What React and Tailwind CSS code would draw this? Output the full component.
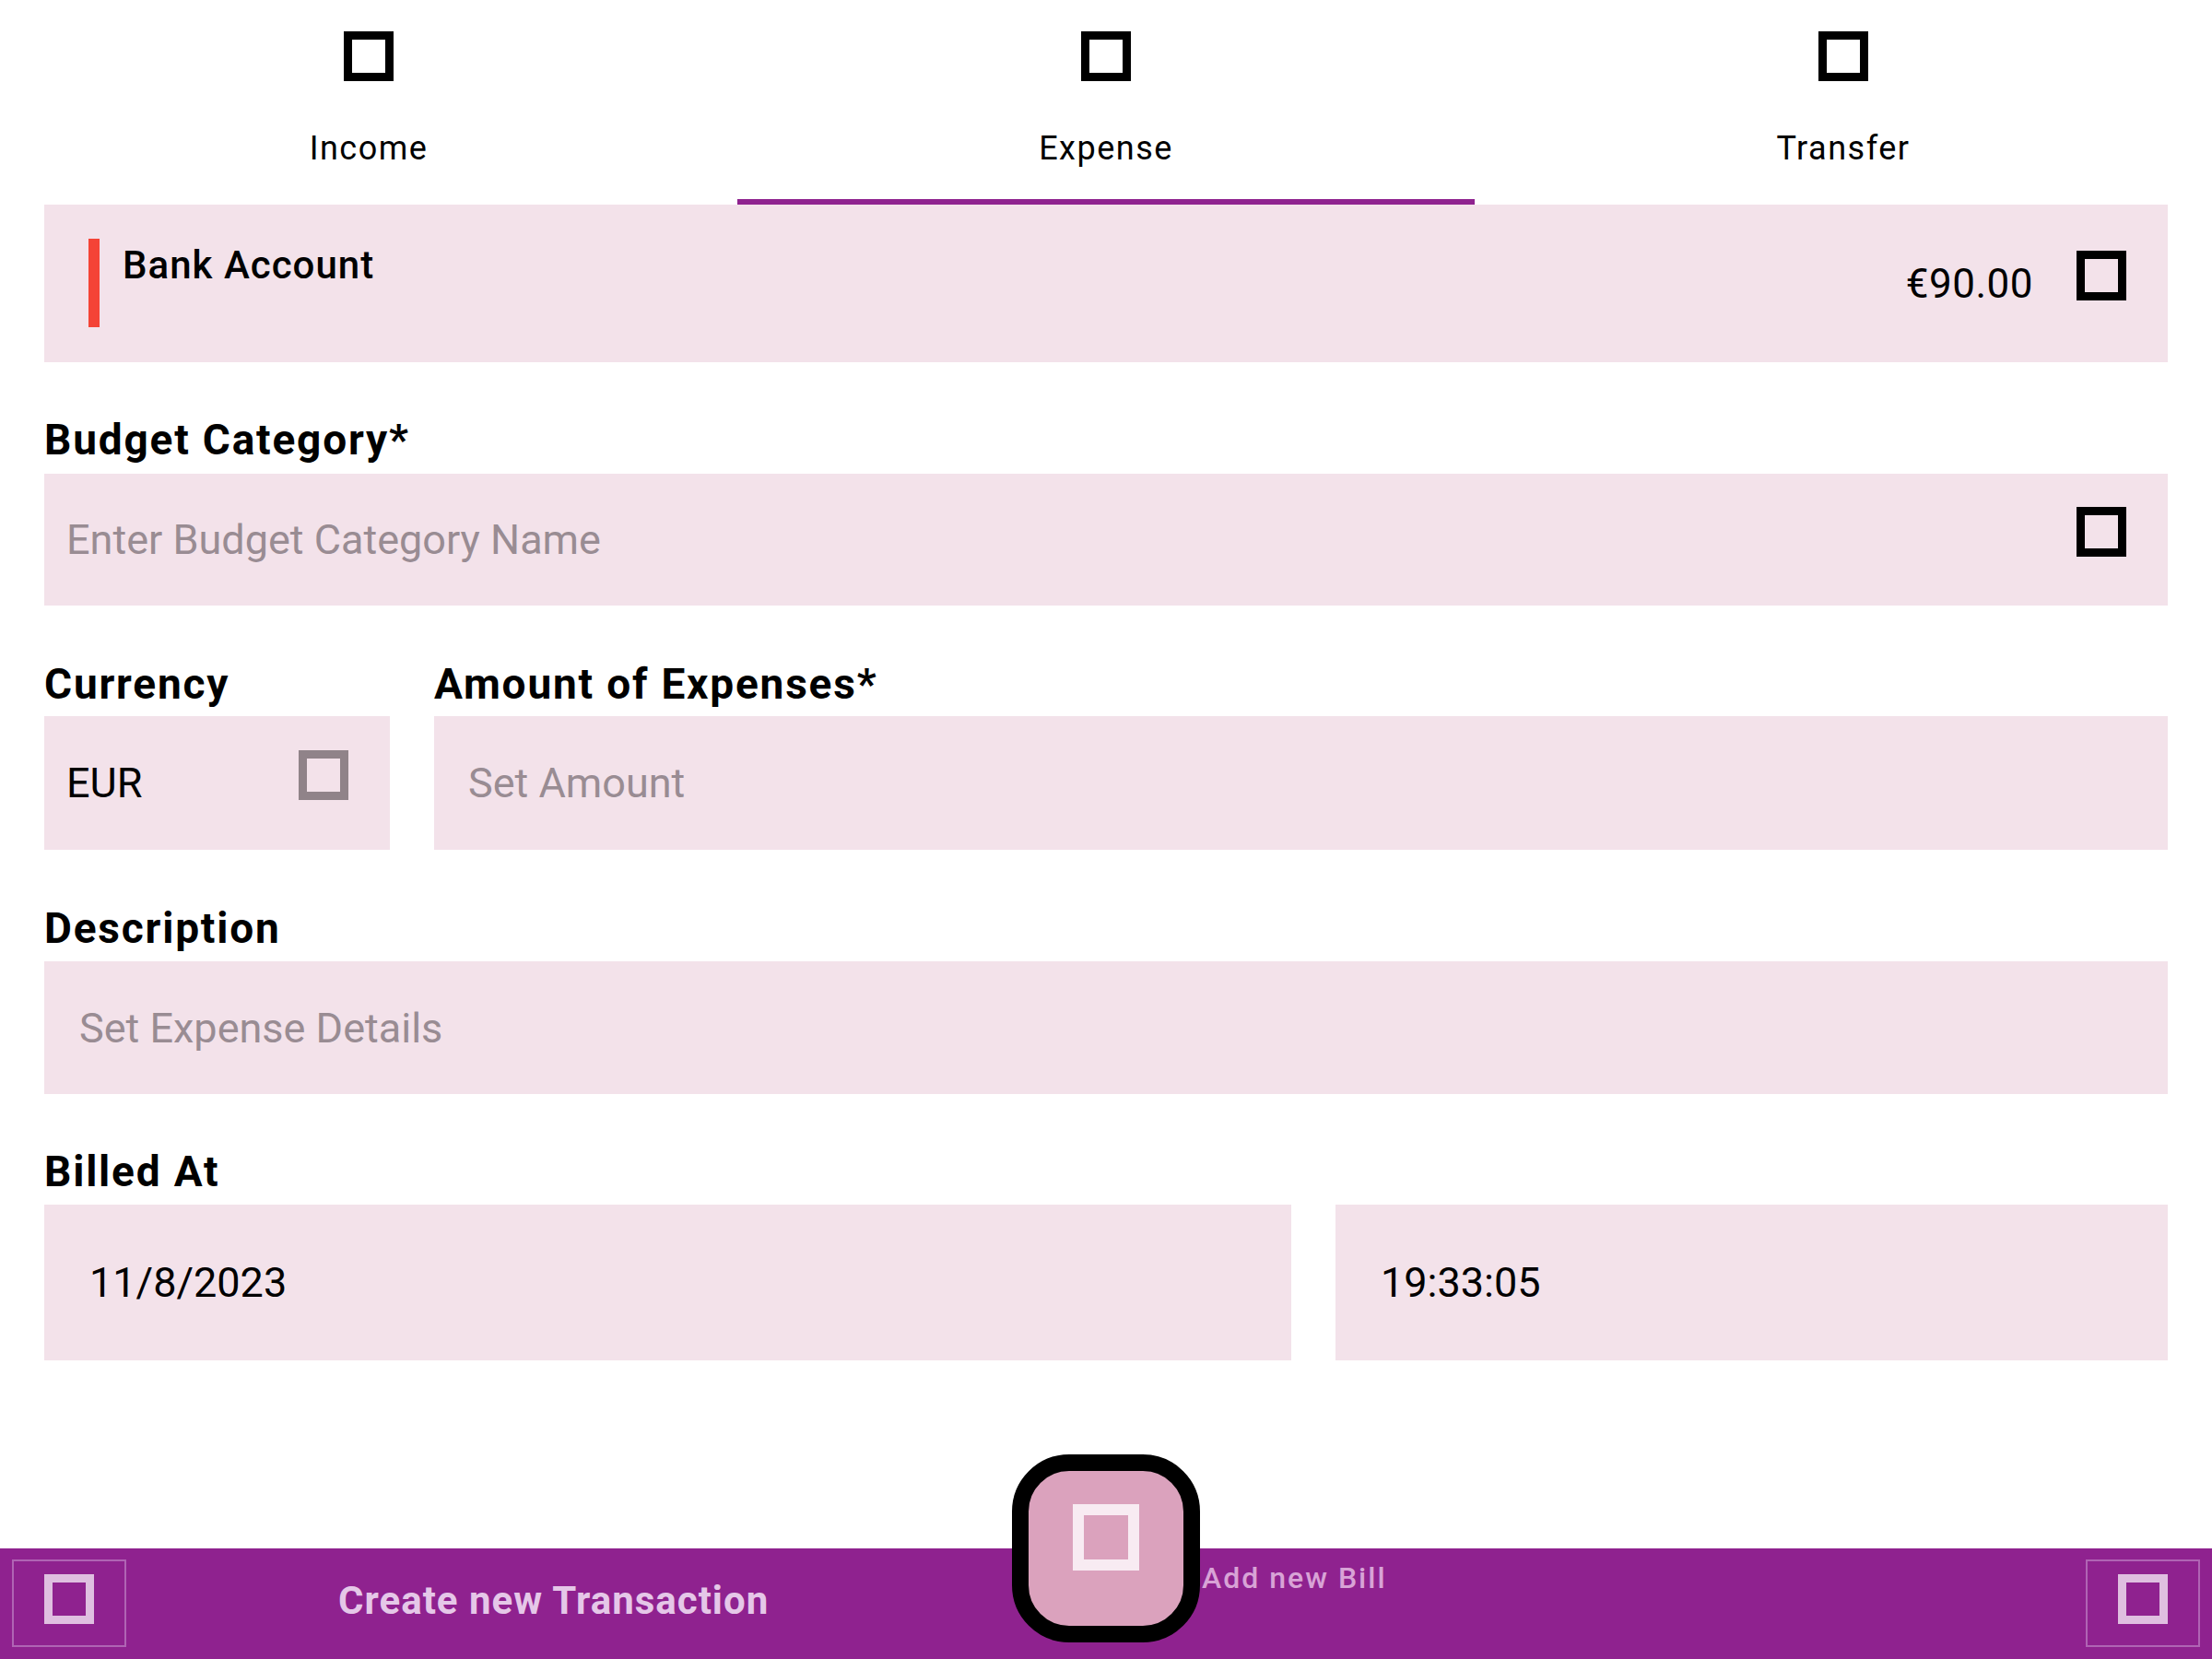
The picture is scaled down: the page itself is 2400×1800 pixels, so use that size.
import React from "react";

const PURPLE = "bg-[#8f228f]";

function Tofu({ className }) {
  // missing-glyph box the app draws in place of its icons
  return <div className={`shrink-0 w-[54px] h-[54px] border-[9px] ${className}`} />;
}

function Label({ children, className = "" }) {
  return (
    <div className={`text-[46px] font-bold leading-none tracking-[1.8px] text-black ${className}`}>
      {children}
    </div>
  );
}

function Tab({ label, active }) {
  return (
    <div
      className={`flex flex-col items-center h-[222px] pt-[34px] ${
        active ? "border-b-[6px] border-[#8f228f]" : ""
      }`}
    >
      <Tofu className="border-black" />
      <div className="mt-[55px] text-[36px] leading-none tracking-[1.5px] text-black">{label}</div>
    </div>
  );
}

export default function App() {
  return (
    <div className="relative flex flex-col w-full h-[1800px] overflow-hidden bg-white font-['Roboto',sans-serif]">
      <div className="grid grid-cols-3">
        <Tab label="Income" />
        <Tab label="Expense" active />
        <Tab label="Transfer" />
      </div>

      <div className="flex flex-col px-[48px]">
        <div className="flex h-[171px] bg-[#f3e2ea] pl-[48px] pr-[45px]">
          <div className="mt-[37px] h-[96px] w-[12px] bg-[#f44336]" />
          <div className="ml-[25px] mt-[45px] text-[42px] font-medium leading-none tracking-[1px] text-black">
            Bank Account
          </div>
          <div className="ml-auto mt-[50px] flex items-start">
            <div className="mt-[14px] text-[44px] leading-none tracking-[0.5px] text-black">€90.00</div>
            <Tofu className="ml-[47px] border-black" />
          </div>
        </div>

        <Label className="mt-[61px]">Budget Category*</Label>
        <div className="mt-[14px] flex items-center h-[143px] bg-[#f3e2ea] pl-[24px] pr-[45px]">
          <div className="text-[45px] leading-none text-[#998c93]">Enter Budget Category Name</div>
          <Tofu className="ml-auto mb-[18px] border-black" />
        </div>

        <div className="mt-[62px] flex gap-[48px]">
          <div className="flex flex-col w-[375px]">
            <Label>Currency</Label>
            <div className="mt-[12px] flex items-center h-[145px] bg-[#f3e2ea] pl-[24px] pr-[45px]">
              <div className="text-[45px] leading-none text-black">EUR</div>
              <Tofu className="ml-auto mb-[18px] border-[#908389]" />
            </div>
          </div>
          <div className="flex flex-col flex-1">
            <Label>Amount of Expenses*</Label>
            <div className="mt-[12px] flex items-center h-[145px] bg-[#f3e2ea] pl-[37px]">
              <div className="text-[45px] leading-none text-[#998c93]">Set Amount</div>
            </div>
          </div>
        </div>

        <Label className="mt-[62px]">Description</Label>
        <div className="mt-[13px] flex items-center h-[144px] bg-[#f3e2ea] pl-[38px]">
          <div className="text-[45px] leading-none text-[#998c93]">Set Expense Details</div>
        </div>

        <Label className="mt-[61px]">Billed At</Label>
        <div className="mt-[13px] flex gap-[48px]">
          <div className="w-[1353px] shrink-0 flex items-center h-[169px] bg-[#f3e2ea] pl-[49px]">
            <div className="text-[45px] leading-none text-black">11/8/2023</div>
          </div>
          <div className="flex-1 flex items-center h-[169px] bg-[#f3e2ea] pl-[49px]">
            <div className="text-[45px] leading-none text-black">19:33:05</div>
          </div>
        </div>
      </div>

      <div className={`relative mt-auto flex items-start h-[120px] ${PURPLE}`}>
        <div className="ml-[13px] mt-[12px] flex items-center justify-center w-[124px] h-[95px] border-2 border-[#b064b4]">
          <Tofu className="mb-[10px] border-[#dfbfe0]" />
        </div>
        <div className="ml-[230px] mt-[36px] text-[42px] font-bold leading-none tracking-[1px] text-[#e5c7e8]">
          Create new Transaction
        </div>
        <div className="ml-auto mr-[13px] mt-[12px] flex items-center justify-center w-[124px] h-[95px] border-2 border-[#b064b4]">
          <Tofu className="mb-[10px] border-[#dfbfe0]" />
        </div>

        <div className="absolute left-1/2 top-[-102px] -translate-x-1/2 w-[204px] h-[204px] rounded-[62px] border-[18px] border-black bg-[#dba2bd] flex justify-center">
          <div className="mt-[36px] w-[72px] h-[72px] border-[12px] border-[#f8ebf2]" />
        </div>
        <div className="absolute left-[1304px] top-[16px] text-[32px] font-medium leading-none tracking-[2px] text-[#d8a3d6]">
          Add new Bill
        </div>
      </div>
    </div>
  );
}
